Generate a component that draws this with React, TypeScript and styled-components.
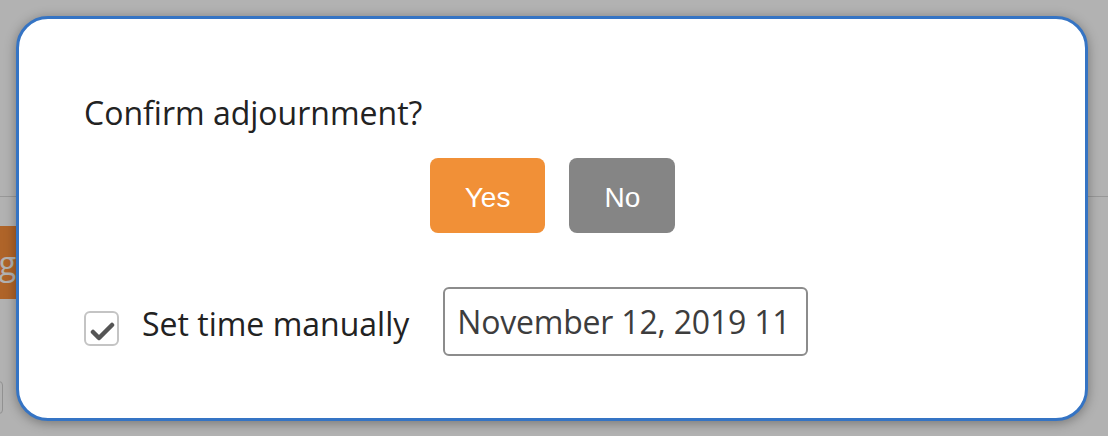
import styled, { createGlobalStyle } from 'styled-components'

const GlobalStyle = createGlobalStyle`
  html, body {
    margin: 0;
    padding: 0;
    background: #ffffff;
    font-family: 'Open Sans', 'Liberation Sans', sans-serif;
  }
`

export default function App() {
  return (
    <Page>
      <GlobalStyle />
      <Header />
      <Toolbar>
        <ActionButton>Adjourning</ActionButton>
      </Toolbar>
      <SideInput />
      <Overlay />
      <Modal>
        <Title>Confirm adjournment?</Title>
        <ButtonRow>
          <DialogButton $variant="yes">Yes</DialogButton>
          <DialogButton $variant="no">No</DialogButton>
        </ButtonRow>
        <ManualRow>
          <CheckBox>
            <svg width="35" height="35" viewBox="0 0 35 35">
              <path
                d="M9 21 L15 27 L28 14"
                fill="none"
                stroke="#555"
                strokeWidth="4.5"
                strokeLinecap="round"
                strokeLinejoin="round"
              />
            </svg>
          </CheckBox>
          <Label>Set time manually</Label>
          <TimeInput readOnly value="November 12, 2019 11" />
        </ManualRow>
      </Modal>
    </Page>
  )
}

const Page = styled.div`
  position: relative;
  width: 1108px;
  height: 436px;
  overflow: hidden;
  background: #ffffff;
`

const Header = styled.div`
  height: 196px;
  border-bottom: 1px solid #dadada;
`

const Toolbar = styled.div`
  display: flex;
  margin-top: 29px;
  margin-left: -180px;
`

const ActionButton = styled.button`
  height: 73px;
  padding: 0 15px 0 20px;
  border: none;
  background: #fb903c;
  color: #fff;
  font-family: 'Open Sans', sans-serif;
  font-size: 32px;
  width: 211px;
  text-align: right;
`

const SideInput = styled.div`
  margin-top: 82px;
  margin-left: -200px;
  width: 203px;
  height: 33px;
  box-sizing: border-box;
  border: 1px solid #d0d0d0;
  border-radius: 4px;
`

const Overlay = styled.div`
  position: absolute;
  inset: 0;
  background: rgba(0, 0, 0, 0.3);
`

const Modal = styled.div`
  position: absolute;
  top: 16px;
  left: 16px;
  width: 1072px;
  height: 405px;
  box-sizing: border-box;
  border: 3px solid #3574c4;
  border-radius: 32px;
  background: #fff;
  box-shadow: 0 2px 12px rgba(0, 0, 0, 0.35);
  display: flex;
  flex-direction: column;
  padding: 72px 64px 0 65px;
`

const Title = styled.div`
  font-size: 32px;
  color: #222;
`

const ButtonRow = styled.div`
  display: flex;
  justify-content: center;
  gap: 24px;
  margin-top: 24px;
`

const DialogButton = styled.button<{ $variant: 'yes' | 'no' }>`
  height: 75px;
  padding: 4px 35px 0;
  border: none;
  border-radius: 8px;
  background: ${(p) => (p.$variant === 'yes' ? '#f19037' : '#858585')};
  color: #fff;
  font-family: 'Liberation Sans', Arial, sans-serif;
  font-size: 28px;
`

const ManualRow = styled.div`
  display: flex;
  align-items: center;
  margin-top: 54px;
`

const CheckBox = styled.div`
  width: 35px;
  height: 35px;
  box-sizing: border-box;
  border: 2px solid #c4c4c4;
  border-radius: 6px;
  margin-top: 14px;
  display: flex;
  svg {
    margin: -2px;
    filter: blur(0.7px);
  }
`

const Label = styled.span`
  margin-left: 23px;
  margin-top: 4px;
  font-size: 32px;
  color: #222;
`

const TimeInput = styled.input`
  margin-left: 34px;
  width: 365px;
  height: 69px;
  box-sizing: border-box;
  border: 2px solid #8c8c8c;
  border-radius: 6px;
  padding: 0 12px;
  font-family: 'Open Sans', sans-serif;
  font-size: 32px;
  letter-spacing: -0.2px;
  color: #3d3d3d;
  outline: none;
`
